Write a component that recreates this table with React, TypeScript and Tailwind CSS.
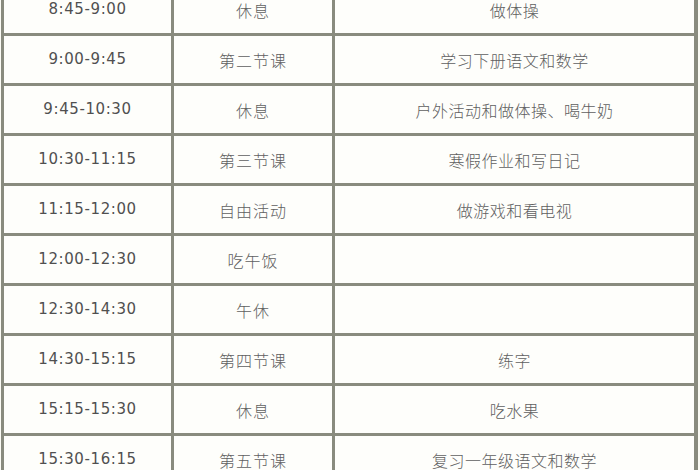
import React from "react";

const rows: [string, string, string][] = [
  ["8:45-9:00", "休息", "做体操"],
  ["9:00-9:45", "第二节课", "学习下册语文和数学"],
  ["9:45-10:30", "休息", "户外活动和做体操、喝牛奶"],
  ["10:30-11:15", "第三节课", "寒假作业和写日记"],
  ["11:15-12:00", "自由活动", "做游戏和看电视"],
  ["12:00-12:30", "吃午饭", ""],
  ["12:30-14:30", "午休", ""],
  ["14:30-15:15", "第四节课", "练字"],
  ["15:15-15:30", "休息", "吃水果"],
  ["15:30-16:15", "第五节课", "复习一年级语文和数学"],
];

export default function App() {
  return (
    <div className="w-[700px] h-[470px] overflow-hidden bg-[#fbfbf4]">
      <div className="mt-[-17px] ml-[1px] w-[697px] grid grid-cols-[167px_158px_359px] gap-[3px] p-[3px] bg-[#898b7e]">
        {rows.map((r, i) => (
          <React.Fragment key={i}>
            <div className="h-[47px] bg-[#fefefb] flex items-center justify-center text-[15px] text-[#505050] font-['DejaVu_Sans',sans-serif] tracking-[0.6px]">
              {r[0]}
            </div>
            <div className="h-[47px] bg-[#fefefb] flex items-center justify-center text-[16px] text-[#606060] font-['Noto_Sans_CJK_SC',sans-serif] font-light tracking-[1px]">
              {r[1]}
            </div>
            <div className="h-[47px] bg-[#fefefb] flex items-center justify-center text-[16px] text-[#606060] font-['Noto_Sans_CJK_SC',sans-serif] font-light tracking-[0.5px]">
              {r[2]}
            </div>
          </React.Fragment>
        ))}
      </div>
    </div>
  );
}
